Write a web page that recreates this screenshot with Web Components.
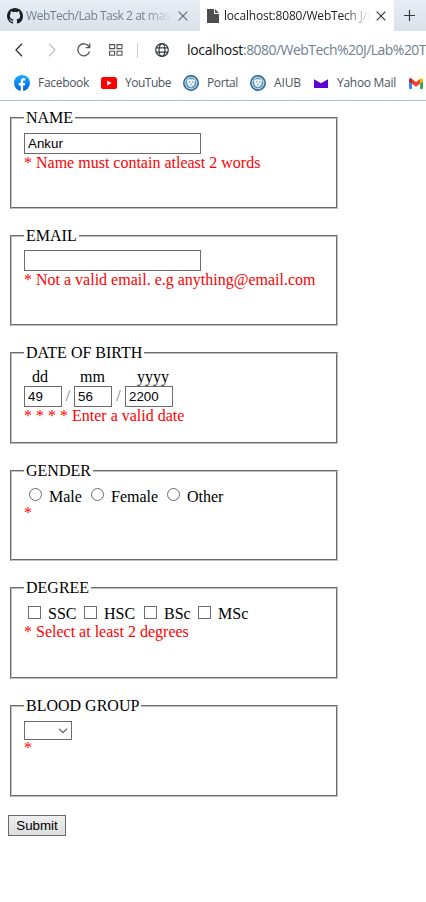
<!DOCTYPE html>
<html lang="en"><head><meta charset="utf-8"><title>localhost:8080/WebTech J/Lab Task</title>
<style>body{margin:0;background:#fff;overflow:hidden}</style></head>
<body><app-window></app-window>
<script>
const define=(name,html,init)=>customElements.define(name,class extends HTMLElement{
  connectedCallback(){
    if(this.shadowRoot)return;
    const t=document.createElement('template');t.innerHTML=html;
    this.attachShadow({mode:'open'}).append(t.content.cloneNode(true));
    if(init)init.call(this,this.shadowRoot);
  }
});
// Label whose letter spacing is adjusted to span a given width
define('fit-text',`<style>:host{display:block;white-space:pre;flex:none}span{display:inline-block}</style><span><slot></slot></span>`,function(r){
  const s=r.querySelector('span'),w=+this.getAttribute('w'),n=this.textContent.length;
  const real=s.getBoundingClientRect().width;
  if(real)s.style.letterSpacing=((w-real)/n)+'px';
  this.style.width=w+'px';
});
const icons={
github:`<svg width="16" height="16" viewBox="0 0 16 16"><path fill="#1b1f23" d="M8 0C3.58 0 0 3.58 0 8c0 3.54 2.29 6.53 5.47 7.59.4.07.55-.17.55-.38 0-.19-.01-.82-.01-1.49-2.01.37-2.53-.49-2.69-.94-.09-.23-.48-.94-.82-1.13-.28-.15-.68-.52-.01-.53.63-.01 1.08.58 1.23.82.72 1.21 1.87.87 2.33.66.07-.52.28-.87.51-1.07-1.78-.2-3.64-.89-3.64-3.95 0-.87.31-1.59.82-2.15-.08-.2-.36-1.02.08-2.12 0 0 .67-.21 2.2.82a7.6 7.6 0 0 1 4 0c1.53-1.04 2.2-.82 2.2-.82.44 1.1.16 1.92.08 2.12.51.56.82 1.27.82 2.15 0 3.07-1.87 3.75-3.65 3.95.29.25.54.73.54 1.48 0 1.07-.01 1.93-.01 2.2 0 .21.15.46.55.38A8 8 0 0 0 16 8c0-4.42-3.58-8-8-8"/></svg>`,
close:`<svg width="10" height="10" viewBox="0 0 10 10"><path d="M.7.7l8.6 8.6M9.3.7L.7 9.3" stroke="currentColor" stroke-width="1.1"/></svg>`,
file:`<svg width="12" height="14" viewBox="0 0 12 14"><path fill="#4d4d50" d="M0 0h7v5h5v9H0zM8 0l4 4H8z"/></svg>`,
plus:`<svg width="11" height="11" viewBox="0 0 11 11"><path d="M5.5 0v11M0 5.5h11" stroke="#333a42" stroke-width="1.2"/></svg>`,
back:`<svg width="8" height="14" viewBox="0 0 8 14"><path d="M7 .7L1 7l6 6.3" fill="none" stroke="#333" stroke-width="1.3"/></svg>`,
next:`<svg width="8" height="14" viewBox="0 0 8 14"><path d="M1 .7L7 7l-6 6.3" fill="none" stroke="#bfc2c5" stroke-width="1.3"/></svg>`,
reload:`<svg width="14" height="14" viewBox="0 0 14 14"><path d="M12.6 8.5A6 6 0 1 1 12 3.7M12.7.6v4H8.8" fill="none" stroke="#555" stroke-width="1.3"/></svg>`,
grid:`<svg width="14" height="12" viewBox="0 0 14 12"><path d="M.6.6h5v4h-5zM8 .6h5v4H8zM.6 7.2h5v4h-5zM8 7.2h5v4H8z" fill="none" stroke="#555" stroke-width="1.1"/></svg>`,
globe:`<svg width="14" height="14" viewBox="0 0 14 14"><g fill="none" stroke="#2f3943" stroke-width="1.2"><circle cx="7" cy="7" r="6.3"/><ellipse cx="7" cy="7" rx="3" ry="6.3"/><path d="M1 4.8h12M1 9.2h12"/></g></svg>`,
facebook:`<svg width="16" height="16" viewBox="0 0 16 16"><defs><linearGradient id="g" x2="0" y2="1"><stop stop-color="#19afff"/><stop offset="1" stop-color="#0062e0"/></linearGradient></defs><circle cx="8" cy="8" r="8" fill="url(#g)"/><path fill="#fff" d="M6.7 16v-5.6h-2V8h2V6.4c0-2 1.2-3.1 3-3.1l1.6.1v2h-.9c-1 0-1.3.6-1.3 1.2V8h2.1l-.4 2.4H9.1V16z"/></svg>`,
youtube:`<svg width="16" height="12" viewBox="0 0 16 12"><rect width="16" height="12" rx="2.6" fill="#f00"/><path fill="#fff" d="M6.2 3.4v5.2L10.6 6z"/></svg>`,
seal:`<svg width="16" height="16" viewBox="0 0 16 16"><circle cx="8" cy="8" r="7.2" fill="#b7d9ea" stroke="#2e6088" stroke-width="1.5"/><circle cx="8" cy="8" r="5.2" fill="#4f95c0"/><path d="M4 5l2-.8h4l2 .8-.6 5L8 12.500 4.600 10z" fill="#f2f6f4"/><path d="M6 6.300h1.200v1.200H6zM9 6.300h1.200v1.200H9zM7.500 8.500h1v2h-1z" fill="#68879a"/></svg>`,
mail:`<svg width="14" height="10" viewBox="0 0 14 10"><path fill="#5f01d1" d="M0 0h14v10H0z"/><path fill="#fff" d="M0 0h14v1.300L7 5.200 0 1.300z"/></svg>`,
gmail:`<svg width="14" height="11" viewBox="0 0 14 11"><path fill="#4285f4" d="M0 2h3v9H1a1 1 0 0 1-1-1z"/><path fill="#34a853" d="M11 2h3v8a1 1 0 0 1-1 1h-2z"/><path fill="#fbbc04" d="M11 1l1.500-1Q14 0 14 2v1.500l-3 2.300z"/><path fill="#c5221f" d="M0 3.500V2Q0 0 1.500 0L3 1v4.800z"/><path fill="#ea4335" d="M3 1l4 3 4-3v4.800L7 8.700 3 5.800z"/></svg>`,
chevron:`<svg width="10" height="6" viewBox="0 0 10 6"><path d="M1 .8l4 3.700 4-3.700" fill="none" stroke="#757575" stroke-width="1.500"/></svg>`};
define('ui-icon',`<style>:host{display:block;flex:none}svg{display:block}</style>`,function(r){
  const t=document.createElement('template');t.innerHTML=icons[this.getAttribute('name')];r.append(t.content);
});
define('browser-tab',`<style>
:host{display:flex;box-sizing:border-box;height:31px;align-items:center;flex:none;color:#74808d}
:host([active]){background:#fff;color:#202329}
.t{overflow:hidden;flex:none;line-height:20px;-webkit-mask-image:linear-gradient(90deg,#000 82%,transparent 100%);mask-image:linear-gradient(90deg,#000 82%,transparent 100%)}
.x{color:#5d656e}:host([active]) .x{color:#2b3035}</style>
<slot name="icon"></slot><div class="t"><slot></slot></div><ui-icon class="x" name="close"></ui-icon>`,function(r){
  const [pad,gap,w,gap2,total]=this.getAttribute('box').split(' ');
  this.style.cssText=`padding-left:${pad}px;width:${total}px`;
  const t=r.querySelector('.t');t.style.cssText=`width:${w}px;margin:0 ${gap2}px 0 ${gap}px`;
});
define('browser-chrome',`<style>
:host{display:block;height:101px;box-sizing:border-box;border-bottom:1px solid #afbfcd;font:12px/20px "Open Sans","Noto Sans",sans-serif;overflow:hidden}
.tabs{height:31px;display:flex;background:linear-gradient(#e6edf5,#dae1ea);align-items:center}
.tabs>ui-icon{margin-left:10px}
.bar{height:38px;display:flex;align-items:center;padding-left:15px}
.sep{width:1px;height:15px;background:#c9cdd1;margin:0 17px 0 14px;flex:none}
.url{display:flex;font-size:14px;margin-left:18px;color:#101214}.url .p{color:#70808f}
.marks{height:28px;display:flex;align-items:center;color:#4a5560}
</style>
<div class="tabs">
<browser-tab box="7 3 146 6 200"><ui-icon slot="icon" name="github"></ui-icon><fit-text w="144">WebTech/Lab Task 2 at mas</fit-text></browser-tab>
<browser-tab active box="7 5 146 6 194"><ui-icon slot="icon" name="file"></ui-icon><fit-text w="149">localhost:8080/WebTech J/L</fit-text></browser-tab>
<ui-icon name="plus"></ui-icon></div>
<div class="bar"><ui-icon name="back"></ui-icon><ui-icon name="next" style="margin-left:25px"></ui-icon><ui-icon name="reload" style="margin-left:21px"></ui-icon><ui-icon name="grid" style="margin-left:18px"></ui-icon><span class="sep"></span><ui-icon name="globe"></ui-icon>
<div class="url"><fit-text w="56">localhost</fit-text><fit-text class="p" w="183">:8080/WebTech%20J/Lab%20T</fit-text></div></div>
<div class="marks">
<ui-icon name="facebook" style="margin-left:14px"></ui-icon><fit-text w="51" style="margin-left:8px">Facebook</fit-text>
<ui-icon name="youtube" style="margin-left:12px"></ui-icon><fit-text w="46" style="margin-left:8px">YouTube</fit-text>
<ui-icon name="seal" style="margin-left:12px"></ui-icon><fit-text w="31" style="margin-left:8px">Portal</fit-text>
<ui-icon name="seal" style="margin-left:12px"></ui-icon><fit-text w="27" style="margin-left:8px">AIUB</fit-text>
<ui-icon name="mail" style="margin-left:13px"></ui-icon><fit-text w="59" style="margin-left:9px">Yahoo Mail</fit-text>
<ui-icon name="gmail" style="margin-left:13px"></ui-icon></div>`);
define('field-group',`<style>
:host{display:block;height:100px}
fieldset{box-sizing:border-box;width:328px;height:100%;margin:0;border:2px groove #c0c0c0;padding:var(--top,6px) 12px 0;min-width:0}
legend{padding:0 2px;height:18px;line-height:18px}
</style><fieldset><legend></legend><slot></slot></fieldset>`,function(r){r.querySelector('legend').textContent=this.getAttribute('label')});
define('text-field',`<style>:host{display:block;flex:none}
input{display:block;box-sizing:border-box;width:100%;height:21px;border:1px solid #6b6b6b;border-radius:0;padding:1px 3px;margin:0;background:#fff;font:13.333px "Liberation Sans",sans-serif;color:#000;outline:0}</style><input type="text">`,function(r){
  this.style.width=this.getAttribute('w')+'px';const i=r.querySelector('input');i.value=this.getAttribute('value')||'';i.setAttribute('aria-label','value')});
define('error-note',`<style>:host{display:block;color:red;height:18px;line-height:18px;white-space:pre}</style><slot></slot>`);
define('choice-item',`<style>:host{display:flex;flex:none;height:18px;line-height:18px}
i{box-sizing:border-box;width:13px;height:13px;border:1px solid #6b6b6b;margin:1px 7px 0 0;flex:none}
:host([round]) i{border-radius:50%;margin-top:0}</style><i></i><slot></slot>`);
define('drop-down',`<style>:host{display:flex;box-sizing:border-box;width:48px;height:19px;border:1px solid #6b6b6b;align-items:center;justify-content:flex-end;padding-right:3px;background:#fff}</style><ui-icon name="chevron"></ui-icon>`);
define('submit-button',`<style>:host{display:block}button{display:block;box-sizing:border-box;width:58px;height:21px;border:1px solid #6b6b6b;border-radius:0;background:linear-gradient(#efefef,#dcdcdc);padding:0;font:13.333px "Liberation Sans",sans-serif;color:#000}</style><button><slot></slot></button>`);
define('app-window',`<style>
:host{display:block;width:426px;height:902px;background:#fff;overflow:hidden;font:16px/18px "Liberation Serif",serif;color:#000}
main{padding:8px 0 0 10px;display:flex;flex-direction:column}
.row{display:flex}.a{margin-bottom:18px}.b{height:99px;margin-bottom:18px}
.heads{padding-left:8px;height:18px}
.slash{width:12px;text-align:center;color:#777;line-height:20px}
submit-button{margin-left:-2px;margin-top:18px}
</style>
<browser-chrome></browser-chrome>
<main>
<field-group label="NAME" class="a"><text-field w="177" value="Ankur"></text-field><error-note>* Name must contain atleast 2 words</error-note></field-group>
<field-group label="EMAIL" class="b" style="--top:5px"><text-field w="177"></text-field><error-note>* Not a valid email. e.g anything@email.com</error-note></field-group>
<field-group label="DATE OF BIRTH" class="a"><div class="row heads"><span style="width:48px">dd</span><span style="width:57px">mm</span><span>yyyy</span></div>
<div class="row"><text-field w="38" value="49"></text-field><span class="slash">/</span><text-field w="38" value="56"></text-field><span class="slash" style="width:13px">/</span><text-field w="48" value="2200"></text-field></div><error-note>* * * * Enter a valid date</error-note></field-group>
<field-group label="GENDER" class="b"><div class="row" style="padding:2px 0 0 5px;margin-bottom:-2px"><choice-item round style="width:62px">Male</choice-item><choice-item round style="width:76px">Female</choice-item><choice-item round>Other</choice-item></div><error-note>*</error-note></field-group>
<field-group label="DEGREE" class="a"><div class="row" style="padding:2px 0 0 4px"><choice-item style="width:56px">SSC</choice-item><choice-item style="width:60px">HSC</choice-item><choice-item style="width:54px">BSc</choice-item><choice-item>MSc</choice-item></div><error-note>* Select at least 2 degrees</error-note></field-group>
<field-group label="BLOOD GROUP"><drop-down></drop-down><error-note style="margin-top:-1px">*</error-note></field-group>
<submit-button>Submit</submit-button>
</main>`);
</script></body></html>
